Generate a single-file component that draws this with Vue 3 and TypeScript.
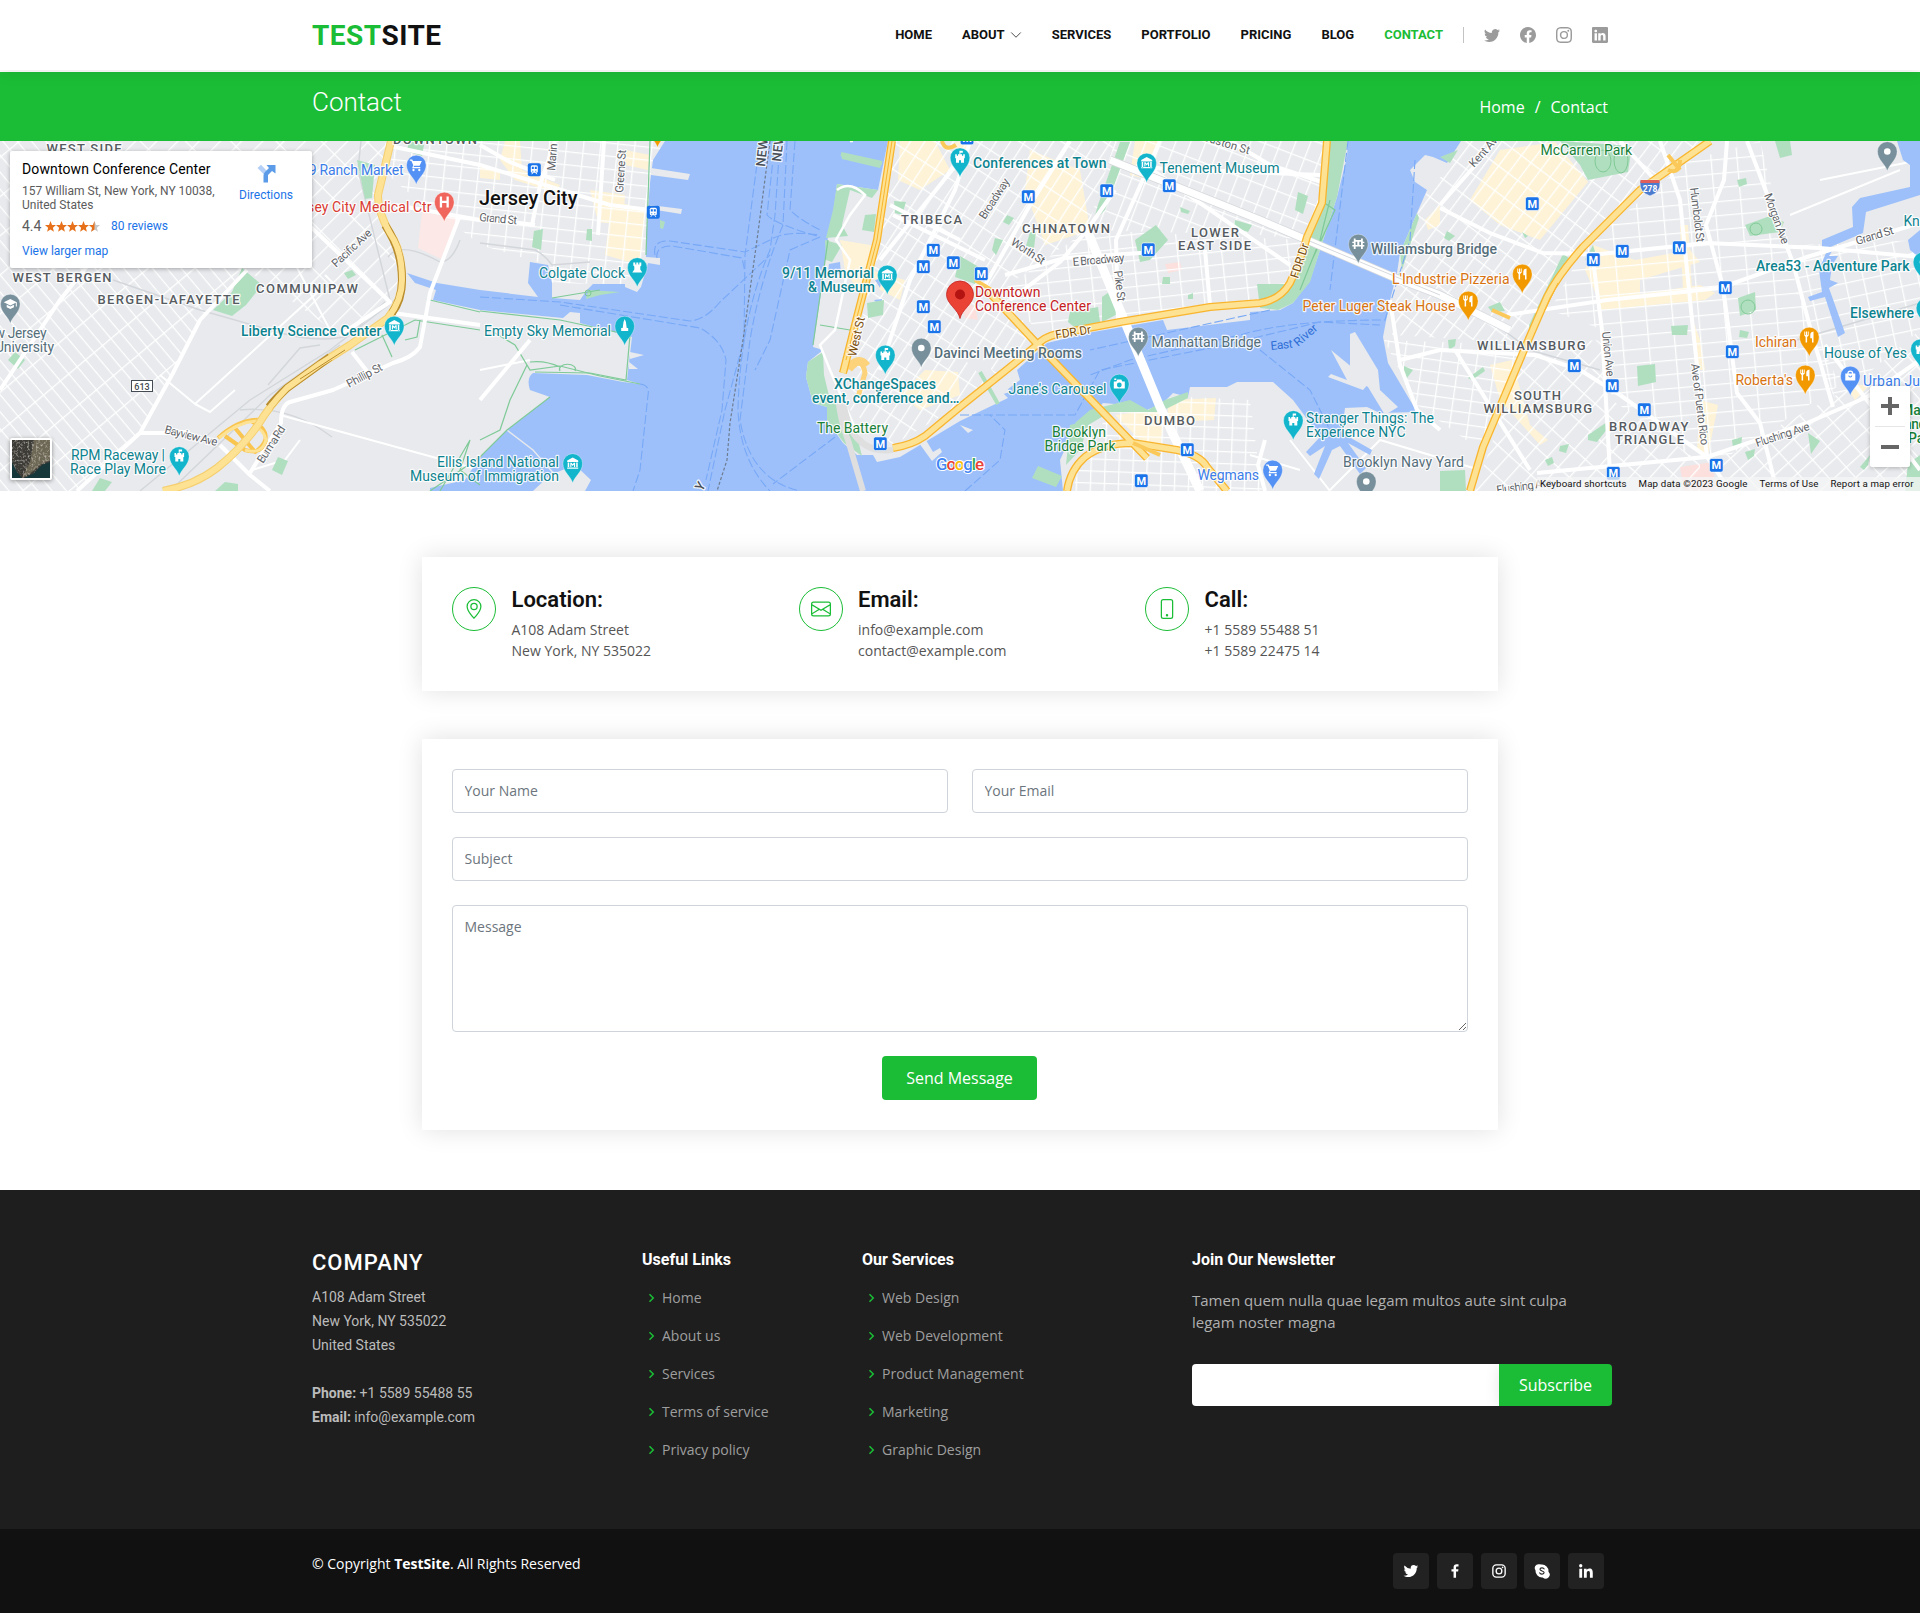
<script setup lang="ts">
type Tone = 'teal' | 'slate' | 'blue' | 'red' | 'orange' | 'green' | 'area' | 'street' | 'brown' | 'city' | 'main' | 'river' | 'state'
interface Label { t: string; x: number; y: number; w?: number; k: Tone; r?: number; b?: boolean }
interface Pin { x: number; y: number; c: string; g: string }

const nav = ['Home', 'About', 'Services', 'Portfolio', 'Pricing', 'Blog', 'Contact']
const usefulLinks = ['Home', 'About us', 'Services', 'Terms of service', 'Privacy policy']
const services = ['Web Design', 'Web Development', 'Product Management', 'Marketing', 'Graphic Design']

const icons: Record<string, string> = {
  twitter: 'M5.026 15c6.038 0 9.341-5.003 9.341-9.334 0-.14 0-.282-.006-.422A6.685 6.685 0 0 0 16 3.542a6.658 6.658 0 0 1-1.889.518 3.301 3.301 0 0 0 1.447-1.817 6.533 6.533 0 0 1-2.087.793A3.286 3.286 0 0 0 7.875 6.03a9.325 9.325 0 0 1-6.767-3.429 3.289 3.289 0 0 0 1.018 4.382A3.323 3.323 0 0 1 .64 6.575v.045a3.288 3.288 0 0 0 2.632 3.218 3.203 3.203 0 0 1-.865.115 3.23 3.23 0 0 1-.614-.057 3.283 3.283 0 0 0 3.067 2.277A6.588 6.588 0 0 1 .78 13.58a6.32 6.32 0 0 1-.78-.045A9.344 9.344 0 0 0 5.026 15z',
  facebook: 'M16 8.049c0-4.446-3.582-8.05-8-8.05C3.58 0-.002 3.603-.002 8.05c0 4.017 2.926 7.347 6.75 7.951v-5.625h-2.03V8.05H6.75V6.275c0-2.017 1.195-3.131 3.022-3.131.876 0 1.791.157 1.791.157v1.98h-1.009c-.993 0-1.303.621-1.303 1.258v1.51h2.218l-.354 2.326H9.25V16c3.824-.604 6.75-3.934 6.75-7.951z',
  instagram: 'M8 0C5.829 0 5.556.01 4.703.048 3.85.088 3.269.222 2.76.42a3.917 3.917 0 0 0-1.417.923A3.927 3.927 0 0 0 .42 2.76C.222 3.268.087 3.85.048 4.7.01 5.555 0 5.827 0 8.001c0 2.172.01 2.444.048 3.297.04.852.174 1.433.372 1.942.205.526.478.972.923 1.417.444.445.89.719 1.416.923.51.198 1.09.333 1.942.372C5.555 15.99 5.827 16 8 16s2.444-.01 3.298-.048c.851-.04 1.434-.174 1.943-.372a3.916 3.916 0 0 0 1.416-.923c.445-.445.718-.891.923-1.417.197-.509.332-1.09.372-1.942C15.99 10.445 16 10.173 16 8s-.01-2.445-.048-3.299c-.04-.851-.175-1.433-.372-1.941a3.926 3.926 0 0 0-.923-1.417A3.911 3.911 0 0 0 13.24.42c-.51-.198-1.092-.333-1.943-.372C10.443.01 10.172 0 7.998 0h.003zm-.717 1.442h.718c2.136 0 2.389.007 3.232.046.78.035 1.204.166 1.486.275.373.145.64.319.92.599.28.28.453.546.598.92.11.281.24.705.275 1.485.039.843.047 1.096.047 3.231s-.008 2.389-.047 3.232c-.035.78-.166 1.203-.275 1.485a2.47 2.47 0 0 1-.599.919c-.28.28-.546.453-.92.598-.28.11-.704.24-1.485.276-.843.038-1.096.047-3.232.047s-2.39-.009-3.233-.047c-.78-.036-1.203-.166-1.485-.276a2.478 2.478 0 0 1-.92-.598 2.48 2.48 0 0 1-.6-.92c-.109-.281-.24-.705-.275-1.485-.038-.843-.046-1.096-.046-3.233 0-2.136.008-2.388.046-3.231.036-.78.166-1.204.276-1.486.145-.373.319-.64.599-.92.28-.28.546-.453.92-.598.282-.11.705-.24 1.485-.276.738-.034 1.024-.044 2.515-.045v.002zm4.988 1.328a.96.96 0 1 0 0 1.92.96.96 0 0 0 0-1.92zm-4.27 1.122a4.109 4.109 0 1 0 0 8.217 4.109 4.109 0 0 0 0-8.217zm0 1.441a2.667 2.667 0 1 1 0 5.334 2.667 2.667 0 0 1 0-5.334z',
  linkedin: 'M0 1.146C0 .513.526 0 1.175 0h13.65C15.474 0 16 .513 16 1.146v13.708c0 .633-.526 1.146-1.175 1.146H1.175C.526 16 0 15.487 0 14.854V1.146zm4.943 12.248V6.169H2.542v7.225h2.401zm-1.2-8.212c.837 0 1.358-.554 1.358-1.248-.015-.709-.52-1.248-1.342-1.248-.822 0-1.359.54-1.359 1.248 0 .694.521 1.248 1.327 1.248h.016zm4.908 8.212V9.359c0-.216.016-.432.08-.586.173-.431.568-.878 1.232-.878.869 0 1.216.662 1.216 1.634v3.865h2.401V9.25c0-2.22-1.184-3.252-2.764-3.252-1.274 0-1.845.7-2.165 1.193v.025h-.016a5.54 5.54 0 0 1 .016-.025V6.169h-2.4c.03.678 0 7.225 0 7.225h2.4z',
}
const socials = ['twitter', 'facebook', 'instagram', 'linkedin']

const info = [
  {
    title: 'Location:', lines: ['A108 Adam Street', 'New York, NY 535022'],
    d: 'M12.166 8.94c-.524 1.062-1.234 2.12-1.96 3.07A31.493 31.493 0 0 1 8 14.58a31.481 31.481 0 0 1-2.206-2.57c-.726-.95-1.436-2.008-1.96-3.07C3.304 7.867 3 6.862 3 6a5 5 0 0 1 10 0c0 .862-.305 1.867-.834 2.94zM8 16s6-5.686 6-10A6 6 0 0 0 2 6c0 4.314 6 10 6 10zM8 8a2 2 0 1 1 0-4 2 2 0 0 1 0 4zm0 1a3 3 0 1 0 0-6 3 3 0 0 0 0 6z',
  },
  {
    title: 'Email:', lines: ['info@example.com', 'contact@example.com'],
    d: 'M0 4a2 2 0 0 1 2-2h12a2 2 0 0 1 2 2v8a2 2 0 0 1-2 2H2a2 2 0 0 1-2-2V4Zm2-1a1 1 0 0 0-1 1v.217l7 4.2 7-4.2V4a1 1 0 0 0-1-1H2Zm13 2.383-4.708 2.825L15 11.105V5.383Zm-.034 6.876-5.64-3.471L8 9.583l-1.326-.795-5.64 3.47A1 1 0 0 0 2 13h12a1 1 0 0 0 .966-.741ZM1 11.105l4.708-2.897L1 5.383v5.722Z',
  },
  {
    title: 'Call:', lines: ['+1 5589 55488 51', '+1 5589 22475 14'],
    d: 'M11 1a1 1 0 0 1 1 1v12a1 1 0 0 1-1 1H5a1 1 0 0 1-1-1V2a1 1 0 0 1 1-1h6zM5 0a2 2 0 0 0-2 2v12a2 2 0 0 0 2 2h6a2 2 0 0 0 2-2V2a2 2 0 0 0-2-2H5z M8 14a1 1 0 1 0 0-2 1 1 0 0 0 0 2z',
  },
]

/* ---- Map geometry: page-wide coordinates, the view box starts at y = 141 ---- */
const grids = [
  { id: 'ga', a: 50, w: 30, h: 11, p: '0,141 100,141 247,270 200,320 173,373 140,433 77,491 0,491' },
  { id: 'gb', a: 45, w: 15, h: 32, p: '100,141 388,141 378,207 398,250 400,290 340,335 247,270' },
  { id: 'gc', a: 6, w: 17, h: 13, p: '395,141 664,141 650,183 645,255 640,285 552,283 548,265 480,245 455,225 405,190 388,175' },
  { id: 'gd', a: 33, w: 12, h: 23, p: '895,141 1115,141 1087,230 1000,290 1040,343 960,405 893,445 850,410 862,320 880,240' },
  { id: 'ge', a: 21, w: 14, h: 20, p: '1115,141 1325,141 1322,203 1305,240 1260,235 1087,230' },
  { id: 'gf', a: -6, w: 22, h: 13, p: '1087,230 1305,240 1287,287 1260,303 1120,322 1045,338 1000,292' },
  { id: 'gg', a: 2, w: 14, h: 12, p: '1110,412 1188,397 1250,400 1262,491 1072,491 1085,450' },
  { id: 'gh', a: 37, w: 12, h: 22, p: '1447,170 1462,141 1705,141 1583,247 1547,297 1527,343 1392,335 1400,253 1428,190' },
  { id: 'gi', a: -5, w: 26, h: 14, p: '1586,245 1690,160 1760,141 1800,300 1840,385 1730,455 1700,462 1612,400 1603,330 1550,310' },
  { id: 'gj', a: 42, w: 15, h: 24, p: '1527,343 1603,340 1612,400 1700,462 1700,491 1475,491' },
  { id: 'gk', a: -12, w: 18, h: 15, p: '1800,245 1920,240 1920,330 1860,380 1835,400 1795,290' },
  { id: 'gl', a: 48, w: 14, h: 20, p: '1855,385 1920,330 1920,491 1725,491 1716,460' },
  { id: 'gm', a: 8, w: 18, h: 12, p: '1384,340 1525,345 1480,450 1417,405' },
]
const parks = [
  '242,268 262,285 246,305 232,316 213,310 232,292', '352,270 356,275 348,279 344,273', '410,141 424,145 422,156 406,151', '357,160 375,165 372,198 365,199',
  '8,360 15,352 25,360 18,369', '278,457 288,461 282,475 272,470', '92,491 100,478 112,482 105,491', '215,491 225,482 238,484 238,491',
  '534,231 543,229 541,250 532,247', '587,229 592,229 592,241 586,240', '588,290 620,292 600,295 586,299',
  '837,184 878,190 872,198 850,190 842,225 848,236 826,238 833,210', '865,215 876,214 874,232 862,230', '894,201 906,202 902,215 895,213', '825,240 842,245 832,262 826,260',
  '808,362 823,352 824,375 830,400 845,410 858,440 862,456 844,443 827,420 827,407 813,403 806,377', '867,303 884,300 883,315 868,318', '841,154 882,163 880,168 842,159',
  '1120,142 1130,142 1105,210 1093,222 1098,205', '1007,215 1014,218 1009,225 1003,222', '995,238 1003,240 996,255 992,250', '960,256 984,270 975,284 955,277', '1135,240 1156,225 1168,240 1150,260 1140,262',
  '1030,232 1036,232 1034,248 1026,246', '1070,312 1098,307 1100,322 1078,330 1068,322', '1102,297 1112,290 1118,314 1102,322',
  '1330,141 1348,141 1337,197 1320,250 1310,282 1293,303 1278,310 1260,308 1257,284 1288,284 1307,240 1322,203', '1298,192 1308,196 1303,214 1295,210', '1235,220 1252,225 1248,232 1234,227', '1180,207 1190,211 1188,214 1181,212', '1163,277 1170,277 1170,284 1162,284', '1188,295 1193,293 1193,299 1188,299',
  '1090,410 1130,400 1148,410 1165,400 1188,392 1188,398 1160,412 1110,412 1080,430 1075,423', '1038,466 1062,476 1056,487 1032,478', '1070,425 1090,420 1080,450 1066,465', '1400,253 1417,213 1419,218 1402,270', '1404,366 1413,370 1404,382',
  '1560,141 1632,146 1628,172 1588,180 1580,165', '1440,157 1458,150 1450,163', '1775,141 1790,141 1792,155 1780,158', '1737,180 1746,178 1747,184 1739,187', '1745,225 1770,216 1784,222 1780,232 1750,236', '1738,298 1755,292 1756,310 1740,316', '1637,366 1655,364 1656,382 1638,386', '1671,326 1688,325 1687,335 1672,335', '1585,260 1593,245 1596,255', '1563,254 1569,258 1530,335 1529,325', '1447,231 1455,236 1449,241 1444,238', '1522,232 1528,236 1525,238', '1588,435 1607,422 1608,428 1597,442 1588,440', '1560,446 1569,444 1566,453 1559,451', '1545,460 1552,457 1554,463 1548,466', '1732,440 1742,437 1741,448 1733,448', '1745,452 1755,449 1754,456 1748,460', '1808,433 1820,441 1811,454', '1860,467 1870,455 1868,465 1864,470', '1740,330 1749,332 1747,338 1739,337', '1468,378 1483,367 1485,371 1472,380', '1440,471 1465,470 1466,491 1440,491', '1448,340 1456,339 1455,346 1449,350', '1488,307 1500,302 1505,311 1492,312', '1908,464 1920,455 1920,491 1905,491',
]
const shops = [
  '505,141 520,141 522,170 560,185 556,193 515,180 500,160', '590,190 625,195 623,225 598,222', '612,200 645,210 640,265 605,255', '480,165 500,170 500,180 480,178', '625,150 650,155 648,170 625,165',
  '900,141 935,141 950,170 920,190 898,180', '840,240 876,246 864,300 845,270', '955,142 975,141 960,160', '1030,150 1080,170 1090,230 1045,245 1025,190', '1135,141 1160,141 1150,180 1130,175', '925,370 958,372 960,395 920,410 900,395', '957,285 975,295 968,310 955,300', '870,270 905,280 900,300 880,290',
  '1115,415 1165,408 1160,450 1140,440', '1168,400 1216,398 1214,420 1168,422', '1425,220 1440,205 1440,225 1428,230',
  '1500,150 1555,142 1588,182 1540,240 1500,225 1470,200', '1593,245 1635,260 1690,250 1700,262 1640,280 1640,300 1600,303 1585,270', '1600,300 1700,285 1715,293 1705,300 1600,310', '1680,225 1688,225 1692,290 1683,290', '1693,320 1700,340 1705,370 1695,370', '1490,365 1512,360 1530,425 1548,440 1540,445 1500,400', '1700,400 1718,405 1708,455 1697,450', '1845,385 1870,385 1855,400',
]
const bigRoads = [
  'M247 270 200 320 173 373 140 433 77 491', 'M460 215 430 293 420 347 Q412 358 393 363L333 390 290 402 Q281 405 281 423L250 473', 'M480 325 393 313', 'M0 390 60 300 140 200', 'M385 145 480 165 610 205 650 210', 'M480 400 530 340', 'M140 433 165 433 190 432', 'M220 445 250 475 270 491', 'M235 155 390 302 340 335', 'M352 352 370 375',
  'M532 225 540 185 555 141', 'M604 141 598 235', 'M480 218 535 225', 'M395 205 480 220', 'M480 145 510 162 555 180', 'M960 160 880 260', 'M960 240 890 205', 'M893 215 985 260', 'M970 141 955 190 910 280 880 370', 'M985 285 1030 205 1070 141', 'M1115 190 1087 230 1060 262 1010 300', 'M1127 167 1320 175', 'M1230 141 1270 165 1322 182', 'M1118 322 1116 240 1160 141', 'M1005 275 1065 258 1155 252', 'M1205 250 1210 305', 'M1145 165 1290 265',
  'M1440 208 1490 233 1543 253 1600 254 1707 243 1820 248 1920 257', 'M1507 315 1607 300 1720 288 1807 257 1910 226', 'M1537 473 1707 457 1807 423 1867 397 1920 360', 'M1620 395 1707 457 1730 491', 'M1593 260 1602 330 1611 491', 'M1660 141 1680 200 1692 320 1707 457', 'M1727 141 1724 180 1706 225 1723 287 1737 393 1760 423 1777 491', 'M1747 141 1793 263 1810 327 1833 407', 'M1440 205 1480 160 1495 141', 'M1440 350 1535 355 1580 370 1620 395', 'M1390 300 1400 365 1417 410 1440 430', 'M1400 360 1440 350', 'M1620 141 1655 180', 'M1455 350 1530 470', 'M1825 345 1920 470', 'M1265 440 1258 465 1265 491',
]
const highways = [
  'M893 448Q912 445 925 436L960 407 1010 367 1037 345Q1044 337 1057 334L1120 322 1210 307 1260 303Q1280 300 1290 283 1300 262 1307 237L1322 203 1327 141',
  'M987 290 1040 347 1147 458', 'M1067 491Q1070 470 1085 457 1103 443 1133 443L1177 450Q1200 455 1207 467L1227 491',
  'M1470 491 1483 447 1527 343 1547 297Q1558 275 1583 247L1640 190 1710 141', 'M892 141 877 240 857 317 843 373',
]
const ferries = [
  'M795 141 790 210Q800 220 820 230', 'M775 141 767 215Q775 224 820 237', 'M760 141 745 255 744 340 725 410 708 491', 'M780 141 775 215 770 250Q740 320 738 410 740 460 770 491', 'M787 141 783 225Q760 280 750 340L740 420Q750 480 800 491', 'M655 255Q652 240 670 241L745 252 770 240Q785 230 820 235', 'M657 258Q655 246 672 246L742 258 745 272', 'M480 297 560 302 690 321Q705 320 720 302L770 255', 'M560 305 700 328Q722 340 726 360L722 410 706 480', 'M640 384Q650 385 648 395L640 470 633 491', 'M820 237 790 250 770 340 755 370', 'M835 437 773 484', 'M1348 141 1330 290', 'M1415 160 1410 240 1385 320Q1290 320 1240 335L1130 360 1090 375', 'M1270 310 1180 330 1090 350', 'M960 415 1075 415 1100 370 1225 345 1320 322 1380 325', 'M1260 350 1310 390 1330 430', 'M965 491 1000 460 1005 430 990 415',
]
const parkLines = [
  'M480 311 560 320 630 335 626 380 590 373 535 372', 'M640 384 600 376 560 366 530 370 515 345 490 330', 'M550 397 507 430 480 457 430 491', 'M527 365 510 400 500 430 480 440', 'M560 367Q545 360 530 362M560 371A8 5 0 1 1 575 371', 'M430 300 480 312', 'M355 350 415 320 480 330', 'M420 320 417 337 405 340', 'M440 491 470 440 460 470 480 485', 'M382 335 392 357',
  'M650 141 646 255', 'M828 240 813 345', 'M552 298 600 290', 'M820 325 850 330', 'M843 410 850 440', 'M1320 200 1335 210 1312 260 1300 290 1320 240 1330 200',
]

const labels: Label[] = [
  { t: 'WEST SIDE', x: 46.5, y: 152.5, w: 75, k: 'area' }, { t: 'DOWNTOWN', x: 393, y: 143.5, w: 84, k: 'area' },
  { t: '99 Ranch Market', x: 301, y: 175, w: 102.5, k: 'blue' }, { t: 'Jersey City Medical Ctr', x: 287, y: 212, w: 144.5, k: 'red' },
  { t: 'Pacific Ave', x: 336, y: 268, w: 50, k: 'street', r: -43 }, { t: 'WEST BERGEN', x: 12.5, y: 281.5, w: 99, k: 'area' },
  { t: 'BERGEN-LAFAYETTE', x: 97.5, y: 303.5, w: 142, k: 'area' }, { t: 'COMMUNIPAW', x: 256, y: 293, w: 102, k: 'area' },
  { t: 'New Jersey', x: -22, y: 338, w: 68.5, k: 'slate' }, { t: 'University', x: -5, y: 352, w: 59, k: 'slate' },
  { t: 'Liberty Science Center', x: 241, y: 335.5, w: 140.5, k: 'teal', b: true }, { t: 'Phillip St', x: 349, y: 388, w: 39, k: 'street', r: -28 },
  { t: 'Bayview Ave', x: 164, y: 433, w: 54, k: 'street', r: 14 }, { t: 'Burma Rd', x: 263, y: 464, w: 42, k: 'street', r: -57 },
  { t: 'RPM Raceway |', x: 71, y: 460, w: 94, k: 'teal' }, { t: 'Race Play More', x: 70, y: 474, w: 96, k: 'teal' },
  { t: 'Ellis Island National', x: 437, y: 467, w: 122, k: 'teal' }, { t: 'Museum of Immigration', x: 410, y: 481, w: 149, k: 'teal' },
  { t: 'Jersey City', x: 479, y: 204.5, w: 98.5, k: 'city' }, { t: 'Grand St', x: 479, y: 221, w: 38, k: 'street', r: 5 },
  { t: 'Marin Blvd', x: 555, y: 171, w: 50, k: 'street', r: -85 }, { t: 'Greene St', x: 623, y: 193, w: 43, k: 'street', r: -86 },
  { t: 'NEW JERSEY', x: 765, y: 167, k: 'state', r: -84 }, { t: 'NEW YORK', x: 781, y: 162, k: 'state', r: -84 }, { t: 'Y', x: 702, y: 492, k: 'state', r: -58 },
  { t: 'Colgate Clock', x: 539, y: 278, w: 86, k: 'teal' }, { t: 'Empty Sky Memorial', x: 484, y: 336, w: 127, k: 'teal' },
  { t: '9/11 Memorial', x: 782, y: 278, w: 92, k: 'teal', b: true }, { t: '& Museum', x: 808, y: 292, w: 67, k: 'teal', b: true }, { t: 'TRIBECA', x: 901, y: 224, w: 61, k: 'area' },
  { t: 'West St', x: 856, y: 357, w: 40, k: 'brown', r: -77 }, { t: 'XChangeSpaces', x: 834, y: 389, w: 102, k: 'teal', b: true }, { t: 'event, conference and…', x: 812, y: 403, w: 147.5, k: 'teal', b: true },
  { t: 'The Battery', x: 817, y: 433, w: 71, k: 'green' }, { t: 'Davinci Meeting Rooms', x: 934, y: 358, w: 148, k: 'slate', b: true },
  { t: 'Conferences at Town', x: 973, y: 168, w: 133.5, k: 'teal', b: true }, { t: 'Tenement Museum', x: 1159.5, y: 173, w: 120, k: 'teal' },
  { t: 'Broadway', x: 985, y: 220, w: 46, k: 'street', r: -57 }, { t: 'Houston St', x: 1195, y: 138, w: 56, k: 'street', r: 17 },
  { t: 'CHINATOWN', x: 1022, y: 232.5, w: 88, k: 'area' }, { t: 'LOWER', x: 1191, y: 237, w: 48, k: 'area' }, { t: 'EAST SIDE', x: 1178, y: 250, w: 73, k: 'area' },
  { t: 'Worth St', x: 1010, y: 244, w: 38, k: 'street', r: 33 }, { t: 'E Broadway', x: 1073, y: 266, w: 52, k: 'street', r: -5 }, { t: 'Pike St', x: 1114, y: 271, w: 31, k: 'street', r: 83 },
  { t: 'FDR Dr', x: 1056, y: 339, w: 36, k: 'brown', r: -9 }, { t: 'FDR Dr', x: 1298, y: 279, w: 36, k: 'brown', r: -72 },
  { t: 'Downtown', x: 975, y: 297, w: 65.5, k: 'main' }, { t: 'Conference Center', x: 975, y: 311, w: 116, k: 'main' },
  { t: 'Manhattan Bridge', x: 1151.5, y: 347, w: 109.5, k: 'slate' }, { t: 'Williamsburg Bridge', x: 1371, y: 254, w: 126, k: 'slate', b: true },
  { t: "Jane's Carousel", x: 1008.5, y: 394, w: 98, k: 'teal' }, { t: 'DUMBO', x: 1144, y: 424.5, w: 51, k: 'area' },
  { t: 'Brooklyn', x: 1052, y: 437, w: 54, k: 'green' }, { t: 'Bridge Park', x: 1044.5, y: 451, w: 71, k: 'green' }, { t: 'Wegmans', x: 1197.5, y: 480, w: 61.5, k: 'blue' },
  { t: 'Stranger Things: The', x: 1306, y: 423, w: 128, k: 'teal' }, { t: 'Experience NYC', x: 1306, y: 437, w: 99.5, k: 'teal' }, { t: 'Brooklyn Navy Yard', x: 1343, y: 467, w: 121, k: 'slate' },
  { t: 'East', x: 1271, y: 350, w: 22, k: 'river', r: -6 }, { t: 'River', x: 1298, y: 347, w: 27, k: 'river', r: -41 },
  { t: "L'Industrie Pizzeria", x: 1392, y: 284, w: 117.5, k: 'orange' }, { t: 'Peter Luger Steak House', x: 1302.5, y: 311, w: 153, k: 'orange' },
  { t: 'McCarren Park', x: 1540.5, y: 155, w: 91.5, k: 'green' }, { t: 'Kent Ave', x: 1474, y: 168, w: 42, k: 'street', r: -48 },
  { t: 'Humboldt St', x: 1690, y: 188, w: 55, k: 'street', r: 83 }, { t: 'Morgan Ave', x: 1764, y: 195, w: 53, k: 'street', r: 70 }, { t: 'Grand St', x: 1857, y: 245, w: 39, k: 'street', r: -17 },
  { t: 'Knockdown', x: 1903.5, y: 226, w: 72, k: 'teal' }, { t: 'Area53 - Adventure Park', x: 1756, y: 271, w: 153.5, k: 'teal', b: true }, { t: 'Elsewhere', x: 1850, y: 318, w: 64, k: 'teal', b: true },
  { t: 'Ichiran', x: 1755, y: 347, w: 42, k: 'orange' }, { t: 'House of Yes', x: 1824, y: 358, w: 83, k: 'teal' }, { t: "Roberta's", x: 1735.5, y: 385, w: 57.5, k: 'orange' }, { t: 'Urban Jungle', x: 1863, y: 385.5, w: 84, k: 'blue' },
  { t: 'WILLIAMSBURG', x: 1477, y: 350, w: 108.5, k: 'area' }, { t: 'SOUTH', x: 1514, y: 400, w: 47, k: 'area' }, { t: 'WILLIAMSBURG', x: 1483.5, y: 413, w: 108.5, k: 'area' },
  { t: 'BROADWAY', x: 1609, y: 431, w: 79.5, k: 'area' }, { t: 'TRIANGLE', x: 1615, y: 444, w: 69, k: 'area' },
  { t: 'Union Ave', x: 1602, y: 332, w: 45, k: 'street', r: 84 }, { t: 'Ave of Puerto Rico', x: 1691, y: 364, w: 82, k: 'street', r: 83 },
  { t: 'Flushing Ave', x: 1757, y: 447, w: 56, k: 'street', r: -18 }, { t: 'Flushing Ave', x: 1497, y: 494, w: 56, k: 'street', r: -8 },
  { t: 'Maria', x: 1901, y: 415, k: 'green', b: true }, { t: 'Hernandez', x: 1876, y: 429, w: 64, k: 'green', b: true }, { t: 'Park', x: 1908, y: 443, k: 'green', b: true },
]

const TEAL = '#12b5cb', SLATE = '#78909c', BLUE = '#5491f5', ORANGE = '#f29900'
const pins: Pin[] = [
  { x: 637.3, y: 267.5, c: TEAL, g: 'rook' }, { x: 394.3, y: 326, c: TEAL, g: 'museum' }, { x: 179.3, y: 456.5, c: TEAL, g: 'castle' }, { x: 572.7, y: 463.5, c: TEAL, g: 'museum' },
  { x: 624.7, y: 326, c: TEAL, g: 'obelisk' }, { x: 887.3, y: 275, c: TEAL, g: 'museum' }, { x: 885.3, y: 355, c: TEAL, g: 'castle' }, { x: 960, y: 157.7, c: TEAL, g: 'castle' },
  { x: 1146.7, y: 163, c: TEAL, g: 'museum' }, { x: 1119.3, y: 384, c: TEAL, g: 'camera' }, { x: 1293.3, y: 420.5, c: TEAL, g: 'castle' }, { x: 1923, y: 262, c: TEAL, g: 'dot' }, { x: 1926, y: 308, c: TEAL, g: '' }, { x: 1920.5, y: 349, c: TEAL, g: 'castle' },
  { x: 10.3, y: 304, c: SLATE, g: 'cap' }, { x: 921.3, y: 348, c: SLATE, g: 'dot' }, { x: 1358.3, y: 244, c: SLATE, g: 'bridge' }, { x: 1138.3, y: 337, c: SLATE, g: 'bridge' }, { x: 1366.3, y: 481.5, c: SLATE, g: 'dot' }, { x: 1887.3, y: 151.5, c: SLATE, g: 'dot' },
  { x: 416.3, y: 165, c: BLUE, g: 'cart' }, { x: 1272.7, y: 470, c: BLUE, g: 'cart' }, { x: 1850.3, y: 376, c: BLUE, g: 'bag' }, { x: 444.3, y: 202, c: '#f0655c', g: 'hospital' },
  { x: 1522.3, y: 274, c: ORANGE, g: 'fork' }, { x: 1468.3, y: 301, c: ORANGE, g: 'fork' }, { x: 1809.3, y: 337, c: ORANGE, g: 'fork' }, { x: 1805.3, y: 375, c: ORANGE, g: 'fork' }, { x: 657.5, y: 128, c: ORANGE, g: '' },
]
const glyphs: Record<string, string> = {
  rook: 'M-4-5h2v2h1v-2h2v2h1v-2h2v3L3-1v3l2 3h-10l2-3v-3l-1-1z',
  museum: 'M0-6 5.5-3v1.5h-11V-3zM-5-1h1.5v5.5H-5zM3.5-1H5v5.5H3.5zM-5.5 4h11v1.2h-11zM-2.4 3.4V-.8h1.2L0 .8 1.2-.8h1.2v4.2H1.3V1L0 2.5-1.3 1v2.4z',
  castle: 'M-.6-7h3.4v2H.4v1.500H2V-2h1.200v-1.500h1.600V.5H4V5H1V2.500h-2V5h-3V.5h-.8v-4h1.600V-2h1.200v-1.500h1.400z',
  obelisk: 'M0-7 1.2-4 2 2h1.5v3h-7V2H-2l.8-6z',
  camera: 'M-5.5-2.5h2.5l1-2h4l1 2h2.5v7h-11zM0-1.4a2.4 2.4 0 1 0 0 4.8 2.4 2.4 0 0 0 0-4.8zM-5-5.5h2v1.5h-2z',
  dot: 'M0-3.3A3.3 3.3 0 1 0 0 3.3 3.3 3.3 0 0 0 0-3.3z',
  cap: 'M0-5 6.5-1.8V2.5h-1v-3.7L0 1.5-6.5-1.8zM-3.6.8 0 2.6 3.6.8v2.4L0 5-3.6 3.2z',
  bridge: 'M-4.5-5.5h1.8V-4h5.4v-1.5h1.8v3.2H6V-1H4.5v2H6v1.6H4.5V5H2.7V2.6h-5.4V5h-1.8V2.6H-6V1h1.5v-2H-6v-1.3h1.5zM-2.7-2.2V1H-1v-3.2zM1-2.2V1h1.7v-3.2z',
  cart: 'M-6.5-5.5h2.4l.8 1.5H5.5L3.3.8H-2L-2.8 2H4v1.2h-8.2L-3 .3-5-4.3h-1.5zM-2.8 3.8a1.2 1.2 0 1 0 .01 0zM3 3.8a1.2 1.2 0 1 0 .01 0z',
  bag: 'M-5-2.5h2a3 3 0 0 1 6 0h2v7H-5zM-1.8-2.5h3.6a1.8 1.8 0 0 0-3.6 0zM-2-.5a2 2 0 0 0 4 0h-1a1 1 0 0 1-2 0z',
  hospital: 'M-4.5-5.5h2.3v4.3h4.4v-4.3h2.3v11H2.2V1h-4.4v4.5h-2.3z',
  fork: 'M-5-5.5h1V-2h.7v-3.5h1V-2h.7v-3.5h1V-1.5L-2.2 0v5.5h-1.5V0L-5-1.5zM4.2-5.5v11H2.7V1.2H1V-2.5Q1-5 4.2-5.5z',
}
const metros: [number, number][] = [
  [933.3, 250.3], [923.3, 266.7], [953.3, 262.7], [923.3, 306.7], [934.3, 326.7], [880.3, 443.7], [1028.3, 196.7], [1106.7, 190.7], [1169.3, 185.7], [1148.3, 249.7], [981.3, 273.7], [1187.3, 449.7], [1141.3, 480.7], [967, 138],
  [1532.3, 203.7], [1593.3, 259.7], [1622.3, 251.3], [1679.3, 247.7], [1725.3, 287.7], [1732.3, 351.7], [1574.3, 365.7], [1612.3, 385.7], [1644.3, 409.7], [1716.3, 465.3], [1613.3, 473.3],
]
const trains: [number, number][] = [[534.3, 169.7], [653.3, 212.3]]
const star = 'M5.5 0 7 3.9 11 4.1 7.9 6.7 8.9 10.8 5.5 8.5 2.1 10.8 3.1 6.7 0 4.1 4 3.9z'
</script>

<template>
  <div class="page">
    <header class="header">
      <div class="container header-row">
        <a class="logo"><span>Test</span>Site</a>
        <nav class="nav">
          <a v-for="n in nav" :key="n" :class="{ active: n === 'Contact' }">{{ n }}
            <svg v-if="n === 'About'" class="chev" viewBox="0 0 16 16"><path fill="none" stroke="currentColor" stroke-linecap="round" stroke-linejoin="round" d="M2 5l6 6 6-6" /></svg>
          </a>
        </nav>
        <div class="head-social">
          <svg v-for="s in socials" :key="s" viewBox="0 0 16 16"><path :d="icons[s]" fill="currentColor" /></svg>
        </div>
      </div>
    </header>

    <section class="crumbs">
      <div class="container crumbs-row">
        <h2>Contact</h2>
        <ol><li>Home</li><li class="sep">/</li><li>Contact</li></ol>
      </div>
    </section>

    <section class="map">
      <svg class="map-art" viewBox="0 141 1920 350" width="1920" height="350">
        <defs>
          <pattern v-for="g in grids" :id="g.id" :key="g.id" patternUnits="userSpaceOnUse" :width="g.w" :height="g.h" :patternTransform="`rotate(${g.a})`">
            <path :d="`M0 0H${g.w}M0 0V${g.h}`" stroke="#fff" stroke-width="2.6" fill="none" />
          </pattern>
        </defs>
        <rect y="141" width="1920" height="350" fill="#e8eaed" />
        <polygon v-for="(p, i) in shops" :key="'s' + i" :points="p" fill="#fef3d6" />
        <polygon points="422,212 458,218 443,260 418,248" fill="#fce8e6" />
        <polygon points="1165,264 1180,262 1182,270 1168,273" fill="#fce0de" />
        <polygon points="1680,467 1712,462 1716,491 1684,491" fill="#fce0de" />
        <polygon points="960,300 975,307 978,320 965,318" fill="#fce0de" />
        <polygon v-for="g in grids" :key="g.id + 'p'" :points="g.p" :fill="`url(#${g.id})`" />

        <g fill="none" stroke="#d3d6da" stroke-width="1.4">
          <path d="M113 280 200 310 270 330Q320 345 350 335L385 302" /><path d="M140 491 250 400 330 350 395 300" /><path d="M170 491 270 395 340 345" /><path d="M361 141 358 170 390 300" /><path d="M388 257Q400 240 440 262 452 262 460 240" /><path d="M240 410Q290 405 332 437" /><path d="M480 243 535 250Q545 255 552 265L590 262" /><path d="M268 385 300 348 320 345" /><path d="M1780 345 1920 303" /><path d="M1490 320 1530 350 1600 370" />
        </g>
        <g fill="none" stroke="#fff" stroke-width="2">
          <path d="M280 415 480 470M300 440 285 460 252 470M160 375 195 404 320 290M195 404 210 412 235 390M325 275 340 290M285 245 330 330M480 370 530 360M1330 490 1380 440 1480 470M1290 440 1330 491M1820 180 1920 160M1790 215 1900 170M1250 455 1300 470" />
        </g>

        <path fill="#9dc0fa" d="M665 141 653 160 650 183 646 237 646 257 660 258 660 265 648 263 641 287 637 292 625 287 625 284 593 284 587 290 580 300 552 298 552 283 548 265 530 262 528 283 538 297 480 290 437 283 407 273 415 283 436 290 433 300 480 310 563 318 570 312 580 313 580 323 632 337 627 380 640 384 623 382 587 375 533 373Q526 378 530 390L550 397 507 430 480 457 465 480 430 488V491H1063L1060 460 1077 423 1090 417 1103 403 1127 405 1147 410 1163 403 1173 393 1188 397 1190 387 1227 387 1237 382 1273 382 1293 400 1313 427 1320 437 1306 452 1310 456 1325 446 1314 474 1319 479 1332 450 1340 446 1360 474 1366 468 1348 443 1370 455 1372 450 1342 433 1345 408 1367 407 1380 413 1417 412 1388 363 1383 337 1390 300 1397 273 1400 253 1417 213 1427 190 1415 182 1410 170 1425 155 1433 157 1447 163 1461 141H1348L1347 157 1337 197 1320 250 1310 280 1293 303 1280 310 1250 312 1250 320 1167 330 1163 320 1093 332 1047 343 1017 370 1020 380 1003 393 1008 398 960 421 920 445 900 457 877 462 873 455 857 455 843 443 827 420 827 407 813 403 806 377 808 362 823 350 813 347 820 300 828 237 833 217 837 184 878 190 888 141Z" />
        <path fill="#9dc0fa" d="M1897 141 1903 160 1910 165 1910 187 1860 198 1852 207 1853 227 1822 240 1822 248 1834 248 1829 256 1838 256 1832 265 1830 280 1838 283 1829 288 1845 333 1838 337 1825 297 1810 301 1808 297 1822 292 1819 270 1828 248 1863 233 1866 212 1920 195V141Z" />
        <path fill="#9dc0fa" d="M1908 240 1920 230V258L1910 250Z" />
        <g fill="#e8eaed">
          <path d="M651 168 690 174 688 180 651 175ZM650 205 682 209 681 214 650 209ZM533 491 550 475 575 465 591 480 585 491ZM919 443 926 440 933 452 940 448 942 452 932 461ZM1350 334 1355 332 1378 370 1380 390 1398 407 1385 415 1368 387 1350 374ZM1331 350 1370 382 1363 390 1328 377 1331 374 1347 380ZM630 352 644 355 630 359ZM629 362 638 369 629 369ZM1000 395 1010 392 975 350 965 360ZM960 425 973 430 968 433Z" />
          <path d="M507 430 533 450 555 475" fill="none" stroke="#e8eaed" stroke-width="1.4" />
        </g>
        <path d="M829 264 840 262 841 275 828 272ZM875 280 882 278 880 288ZM874 300 882 299 881 307Z" fill="#9dc0fa" />
        <polygon v-for="(p, i) in parks" :key="'k' + i" :points="p" fill="#b0dfc0" />
        <polygon points="660,220 665,222 663,229 660,228" fill="#b0dfc0" />
        <path d="M841 154 882 163M980 372 998 404" stroke="#b0dfc0" stroke-width="4" fill="none" />
        <path v-for="(d, i) in parkLines" :key="'pl' + i" :d="d" fill="none" stroke="#7fca98" stroke-width="1.2" />
        <g fill="none" stroke="#81c995" stroke-width="1"><ellipse cx="1603" cy="161" rx="8" ry="11" /><ellipse cx="1621" cy="160" rx="7" ry="13" /><circle cx="1756" cy="229" r="6" /><circle cx="1748" cy="307" r="7" /><circle cx="588" cy="293" r="3" /></g>

        <path v-for="(d, i) in ferries" :key="'f' + i" :d="d" fill="none" stroke="#78a8f6" stroke-width="1.1" stroke-dasharray="9 3" />
        <path d="M770 141 757 240 743 340 730 423 727 460 717 491" fill="none" stroke="#6e7c90" stroke-width="1.2" stroke-dasharray="3 2" />

        <path v-for="(d, i) in bigRoads" :key="'b' + i" :d="d" fill="none" stroke="#fff" stroke-width="4" stroke-linejoin="round" />
        <path d="M853 141 850 141M837 190Q850 180 865 195L850 215 836 240 850 260 835 330 820 345 830 370 860 440" fill="none" stroke="#fff" stroke-width="2.5" />
        <path d="M1085 225 1127 327 1160 407 1200 491" fill="none" stroke="#fff" stroke-width="9" />
        <path d="M1110 160 1260 220 1307 240 1393 277 1440 295 1510 330" fill="none" stroke="#d6d9dd" stroke-width="8.5" /><path d="M1110 160 1260 220 1307 240 1393 277 1440 295 1510 330" fill="none" stroke="#fff" stroke-width="7" /><path d="M1307 240 1440 295" stroke="#d6d9dd" />
        <path d="M838 395Q840 420 848 440L863 491M843 400Q850 455 893 450" fill="none" stroke="#dfdfe0" stroke-width="6" />
        <path d="M850 370Q862 355 865 373L858 397M845 370Q858 352 868 365" fill="none" stroke="#fcd27a" stroke-width="5" />

        <g fill="none" stroke-linejoin="round">
          <g stroke="#f9c54f" stroke-width="4"><path d="M218 438Q240 418 262 420M235 428 255 452Q272 440 262 428L250 420M225 436 245 450Q262 455 266 440" /></g>
          <path d="M219 438Q240 420 262 421M245 450Q262 455 266 440 264 430 255 426" stroke="#fde293" stroke-width="3" />
          <path d="M391 141 378 195Q378 215 394 240 402 255 402 280 402 300 388 318L350 345 320 364 287 388Q270 405 258 425 240 450 217 468 195 485 163 491" stroke="#f5cf70" stroke-width="8" />
          <path d="M385 225Q402 250 402 280 402 300 392 313M330 357 287 388Q276 398 269 407" stroke="#b98c2e" stroke-width="8" />
          <path d="M391 141 378 195Q378 215 394 240 402 255 402 280 402 300 388 318L350 345 320 364 287 388Q270 405 258 425 240 450 217 468 195 485 163 491" stroke="#fde293" stroke-width="6" />
          <path d="M345 350 300 379" stroke="#b98c2e" />
          <path v-for="(d, i) in highways" :key="'h' + i" :d="d" stroke="#f9b52e" stroke-width="8" />
          <path v-for="(d, i) in highways" :key="'hi' + i" :d="d" stroke="#fde293" stroke-width="5.4" />
          <path d="M892 141 877 240 857 317 846 360M1558 283 1545 310" stroke="#f9b52e" />
          <path d="M1492 310 1510 318M1668 170Q1680 175 1680 160M1133 443 1160 455M942 141Q945 152 956 145M975 280 1000 295M1668 155 1680 170" stroke="#fbc95a" stroke-width="4" />
        </g>

        <g transform="translate(1650 187)"><path d="M-10-5Q-10-6-9-7H9Q10-6 10-4 11 5 0 9-11 5-10-4z" fill="#4a7bcf" stroke="#fff" stroke-width=".6" /><path d="M-9.5-7h19v3h-19z" fill="#df5f5b" /><text y="5" text-anchor="middle" class="shield">278</text></g>
        <rect x="131.500" y="380.500" width="21" height="11" fill="#fff" stroke="#444b52" /><text x="142" y="389.500" class="route" text-anchor="middle">613</text>

        <g v-for="(m, i) in metros" :key="'m' + i" :transform="`translate(${m[0]} ${m[1]})`"><rect x="-6.800" y="-6.800" width="13.600" height="13.600" rx="2" fill="#1a73e8" stroke="#fff" stroke-width=".6" /><text y="4" text-anchor="middle" class="metro">M</text></g>
        <g v-for="(m, i) in trains" :key="'t' + i" :transform="`translate(${m[0]} ${m[1]})`"><rect x="-6.500" y="-6.500" width="13" height="13" rx="2" fill="#1a73e8" /><rect x="-3.500" y="-4.500" width="7" height="7.500" rx="1.500" fill="#fff" /><path d="M-2.500-3h2v2.200h-2zM.5-3h2v2.200h-2zM-2 1h1v1h-1zM1 1h1v1h-1z" fill="#1a73e8" /><path d="M-2.500 4.500l1-1.500M2.500 4.500l-1-1.500" stroke="#fff" /></g>

        <g v-for="(p, i) in pins" :key="'p' + i" :transform="`translate(${p.x} ${p.y})`"><path d="M0 19.500C-1.500 13-9.800 8.500-9.800 0A9.800 9.800 0 1 1 9.800 0C9.800 8.500 1.500 13 0 19.500z" :fill="p.c" stroke="#fff" stroke-opacity=".55" stroke-width=".6" /><path v-if="p.g" :d="glyphs[p.g]" fill="#fff" fill-rule="evenodd" /></g>

        <text v-for="(l, i) in labels" :key="'l' + i" :x="l.x" :y="l.y" :textLength="l.w" :class="['lb', l.k, { strong: l.b }]" :transform="l.r ? `rotate(${l.r} ${l.x} ${l.y})` : undefined">{{ l.t }}</text>

        <path d="M960 318.500C958 309 946.500 304 946.500 294.500A13.500 13.500 0 1 1 973.500 294.500C973.500 304 962 309 960 318.500z" fill="#ea4335" stroke="#c5221f" stroke-width=".8" /><circle cx="960" cy="294.500" r="5" fill="#b31412" />
        <text x="936" y="470" textLength="48" class="google"><tspan fill="#4285f4">G</tspan><tspan fill="#ea4335">o</tspan><tspan fill="#fbbc04">o</tspan><tspan fill="#4285f4">g</tspan><tspan fill="#34a853">l</tspan><tspan fill="#ea4335">e</tspan></text>

        <rect x="1537" y="477" width="383" height="14" fill="#f5f5f5" fill-opacity=".75" />
        <g class="terms"><text x="1540" y="487" textLength="86.500">Keyboard shortcuts</text><text x="1638.500" y="487" textLength="109">Map data ©2023 Google</text><text x="1759.500" y="487" textLength="59">Terms of Use</text><text x="1830.500" y="487" textLength="83">Report a map error</text></g>
      </svg>

      <div class="place">
        <div class="place-main">
          <strong>Downtown Conference Center</strong>
          <p>157 William St, New York, NY 10038, United States</p>
          <div class="rating"><b>4.4</b>
            <svg width="55" height="11" viewBox="0 0 55 11"><path v-for="i in 4" :key="i" :d="star" :transform="`translate(${(i - 1) * 11} 0)`" fill="#e7711b" /><path :d="star" transform="translate(44 0)" fill="#c7c7c7" /><path d="M49.500 0V8.500L46.100 10.800 47.100 6.700 44 4.100 48 3.900z" fill="#e7711b" /></svg>
            <a>80 reviews</a></div>
          <a class="larger">View larger map</a>
        </div>
        <div class="directions">
          <svg width="19" height="19" viewBox="0 0 19 19"><path d="M.5 4 4 .8 10.500 7.500 7.500 11z" fill="#b5d0f6" /><path d="M6.500 18.500V11.500Q6.500 9.500 8 8L12 4 9.500 1H18.500V9.500L15 7 11 11V18.500z" fill="#5b9be8" /></svg>
          <a>Directions</a>
        </div>
      </div>
      <div class="thumb">
        <svg viewBox="0 0 38 38" width="38" height="38">
          <filter id="grain"><feTurbulence type="fractalNoise" baseFrequency=".45" numOctaves="3" seed="4" /><feColorMatrix values="0 0 0 0 .75 0 0 0 0 .72 0 0 0 0 .65 0 0 0 2.600 -1.250" /></filter>
          <rect width="38" height="38" fill="#3d3b36" /><path d="M22 0H38V20L28 25 20 32 10 38 18 22z" fill="#6c6654" /><rect width="38" height="38" filter="url(#grain)" opacity=".7" /><path d="M0 22 5 32 10 38H0zM38 22 30 25 22 33 12 38H38z" fill="#17383b" />
        </svg>
      </div>
      <div class="zoomer"><i class="plus"></i><hr><i></i></div>
    </section>

    <main class="contact">
      <section class="card info">
        <div v-for="c in info" :key="c.title" class="info-item">
          <span class="ring"><svg viewBox="0 0 16 16" width="20" height="20"><path :d="c.d" fill="currentColor" /></svg></span>
          <div><h4>{{ c.title }}</h4><p>{{ c.lines[0] }}<br>{{ c.lines[1] }}</p></div>
        </div>
      </section>
      <form class="card form">
        <div class="pair"><input placeholder="Your Name"><input placeholder="Your Email"></div>
        <input placeholder="Subject">
        <textarea placeholder="Message"></textarea>
        <button type="button">Send Message</button>
      </form>
    </main>

    <footer class="footer">
      <div class="footer-top">
        <div class="container footer-cols">
          <div class="company">
            <h3>Company</h3>
            <p>A108 Adam Street<br>New York, NY 535022<br>United States<br><br><strong>Phone:</strong> +1 5589 55488 55<br><strong>Email:</strong> info@example.com</p>
          </div>
          <div class="links"><h4>Useful Links</h4>
            <ul><li v-for="l in usefulLinks" :key="l"><svg viewBox="0 0 24 24" width="18" height="18"><path d="M10.707 17.707 16.414 12l-5.707-5.707-1.414 1.414L13.586 12l-4.293 4.293z" fill="#1bbd36" /></svg>{{ l }}</li></ul>
          </div>
          <div class="links wide"><h4>Our Services</h4>
            <ul><li v-for="l in services" :key="l"><svg viewBox="0 0 24 24" width="18" height="18"><path d="M10.707 17.707 16.414 12l-5.707-5.707-1.414 1.414L13.586 12l-4.293 4.293z" fill="#1bbd36" /></svg>{{ l }}</li></ul>
          </div>
          <div class="news"><h4>Join Our Newsletter</h4>
            <p>Tamen quem nulla quae legam multos aute sint culpa legam noster magna</p>
            <div class="subscribe"><input aria-label="Email"><button type="button">Subscribe</button></div>
          </div>
        </div>
      </div>
      <div class="container footer-bottom">
        <div class="copy">© Copyright <strong>TestSite</strong>. All Rights Reserved</div>
        <div class="social">
          <a><svg viewBox="0 0 24 24"><path d="M19.633 7.997c.013.175.013.349.013.523 0 5.325-4.053 11.461-11.46 11.461-2.282 0-4.402-.661-6.186-1.809.324.037.636.05.973.05a8.07 8.07 0 0 0 5.001-1.721 4.036 4.036 0 0 1-3.767-2.793c.249.037.499.062.761.062.361 0 .724-.05 1.061-.137a4.027 4.027 0 0 1-3.23-3.953v-.05c.537.299 1.160.486 1.820.511a4.022 4.022 0 0 1-1.796-3.354c0-.748.199-1.434.548-2.032a11.457 11.457 0 0 0 8.306 4.215c-.062-.3-.1-.611-.1-.923a4.026 4.026 0 0 1 4.028-4.028c1.160 0 2.207.486 2.943 1.272a7.957 7.957 0 0 0 2.556-.973 4.020 4.020 0 0 1-1.771 2.220 8.073 8.073 0 0 0 2.319-.624 8.645 8.645 0 0 1-2.019 2.083z" /></svg></a>
          <a><svg viewBox="0 0 24 24"><path d="M13.397 20.997v-8.196h2.765l.411-3.209h-3.176V7.548c0-.926.258-1.560 1.587-1.560h1.684V3.127A22.336 22.336 0 0 0 14.201 3c-2.444 0-4.122 1.492-4.122 4.231v2.355H7.332v3.209h2.753v8.202h3.312z" /></svg></a>
          <a><svg viewBox="0 0 24 24"><rect x="3.800" y="3.800" width="16.400" height="16.400" rx="4.600" fill="none" stroke="#fff" stroke-width="1.800" /><circle cx="12" cy="12" r="3.800" fill="none" stroke="#fff" stroke-width="1.800" /><circle cx="16.800" cy="7.200" r="1.100" /></svg></a>
          <a><svg viewBox="0 0 24 24"><path d="M8 3a5 5 0 0 1 3 .4A8.700 8.700 0 0 1 20.600 13 5 5 0 0 1 13 20.600 8.700 8.700 0 0 1 3.400 11 5 5 0 0 1 8 3z" /><path d="M14.800 9.300C14.300 7.400 9.300 7.200 9.300 9.800 9.300 12.400 14.800 11.400 14.800 14.100 14.800 16.800 9.400 16.600 9 14.500" fill="none" stroke="#222" stroke-width="1.500" stroke-linecap="round" /></svg></a>
          <a><svg viewBox="0 0 24 24"><circle cx="4.983" cy="5.009" r="2.188" /><path d="M9.237 8.855v12.139h3.769v-6.003c0-1.584.298-3.118 2.262-3.118 1.937 0 1.961 1.811 1.961 3.218v5.904H21v-6.657c0-3.270-.704-5.783-4.526-5.783-1.835 0-3.065 1.007-3.568 1.960h-.051v-1.660H9.237zm-6.142 0H6.870v12.139H3.095z" /></svg></a>
        </div>
      </div>
    </footer>
  </div>
</template>

<style>
body { margin: 0; background: #fff; }
</style>

<style scoped>
* { box-sizing: border-box; }
.page { width: 1920px; height: 1613px; display: flex; flex-direction: column; font-family: "Open Sans", sans-serif; color: #444; font-size: 16px; line-height: 24px; overflow: hidden; }
h2, h3, h4, p, ul, ol { margin: 0; padding: 0; list-style: none; font-weight: 400; }
input, textarea, button { font-family: inherit; outline: none; }
.container { width: 1320px; margin: 0 auto; padding: 0 12px; }
.header { height: 70px; flex: none; margin-bottom: 2px; background: #fff; position: relative; z-index: 3; box-shadow: 0 2px 15px rgba(0, 0, 0, .1); }
.header-row { display: flex; align-items: center; height: 70px; }
.logo { font: 700 28px/34px Roboto, sans-serif; color: #111; text-transform: uppercase; margin-right: auto; letter-spacing: .5px; padding-top: 2px; }
.logo span { color: #1bbd36; }
.nav { display: flex; gap: 30px; font: 700 13px/18px Roboto, sans-serif; color: #111; text-transform: uppercase; }
.nav a { display: flex; align-items: center; }
.nav .active { color: #1bbd36; }
.chev { width: 12px; height: 12px; margin-left: 5px; }
.head-social { display: flex; gap: 20px; margin-left: 20px; padding-left: 20px; border-left: 1px solid #c3c3c3; height: 16px; color: #9b9b9b; }
.head-social svg { width: 16px; height: 16px; }
.crumbs { height: 69px; flex: none; background: #1bbd36; color: #fff; }
.crumbs-row { display: flex; justify-content: space-between; }
.crumbs h2 { font: 300 26px/31px Roboto, sans-serif; padding-top: 15px; }
.crumbs ol { display: flex; padding-top: 23px; }
.crumbs .sep { padding: 0 10px; }

.map { position: relative; height: 350px; flex: none; overflow: hidden; }
.map-art { display: block; font-family: Roboto, sans-serif; }
.lb { font-size: 14px; paint-order: stroke; stroke: #fff; stroke-width: 2.4px; stroke-opacity: .85; stroke-linejoin: round; }
.strong { font-weight: 500; }
.teal { fill: #0d838f; }
.slate { fill: #546e7a; }
.blue { fill: #3b7de9; }
.red { fill: #d93a32; }
.main { fill: #c5221f; }
.orange { fill: #d87211; }
.green { fill: #188038; }
.area { fill: #565b61; font-size: 13px; font-weight: 500; }
.street { fill: #5f6368; font-size: 11.5px; }
.brown { fill: #7a4d0c; font-size: 12px; }
.city { fill: #111; font-size: 20px; font-weight: 500; }
.river { fill: #2f6fd6; font-size: 12px; stroke: none; }
.state { fill: #4a4f57; font-size: 13px; font-weight: 500; }
.metro { fill: #fff; font-size: 11px; font-weight: 700; }
.shield { fill: #fff; font-size: 8.5px; font-weight: 700; }
.route { fill: #444b52; font-size: 9px; font-weight: 500; }
.google { font-size: 17px; font-weight: 500; paint-order: stroke; stroke: #fff; stroke-width: 2px; }
.terms { font-size: 9.7px; fill: #111; }
.place { position: absolute; left: 10px; top: 10px; width: 302px; height: 117px; padding: 9px 11px 9px 12px; background: #fff; border-radius: 2px; box-shadow: 0 1px 4px rgba(0, 0, 0, .3); display: flex; justify-content: space-between; font: 12px/14px Roboto, sans-serif; color: #5b5b5b; }
.place-main { width: 205px; }
.place strong { display: block; font-size: 14px; line-height: 18px; font-weight: 400; letter-spacing: .12px; color: #000; white-space: nowrap; }
.place p { margin-top: 6px; width: 200px; }
.place a { color: #1a73e8; }
.rating { display: flex; align-items: center; margin-top: 6px; line-height: 16px; }
.rating b { font-size: 14px; font-weight: 400; width: 23px; }
.rating a { margin-left: 11px; }
.larger { display: block; margin-top: 10px; }
.directions { width: 70px; display: flex; flex-direction: column; align-items: center; padding-top: 4px; gap: 5px; }
.thumb { position: absolute; left: 10px; top: 297px; width: 42px; height: 42px; padding: 2px; background: #fff; border-radius: 2px; box-shadow: 0 1px 4px rgba(0, 0, 0, .4); }
.thumb svg { display: block; }
.zoomer { position: absolute; left: 1870px; top: 245px; width: 40px; height: 81px; background: #fff; border-radius: 2px; box-shadow: 0 1px 4px rgba(0, 0, 0, .25); display: flex; flex-direction: column; align-items: center; justify-content: space-between; padding: 18px 0; }
.zoomer i { width: 18px; height: 4px; background: #666; }
.zoomer .plus { position: relative; }
.zoomer .plus::after { content: ""; position: absolute; left: 7px; top: -7px; width: 4px; height: 18px; background: #666; }
.zoomer hr { width: 30px; height: 1px; border: 0; margin: 0; background: #e6e6e6; }

.contact { width: 1076px; margin: 66px auto 60px; display: flex; flex-direction: column; gap: 48px; }
.card { background: #fff; padding: 30px; box-shadow: 0 0 24px rgba(0, 0, 0, .12); }
.info { height: 134px; display: flex; gap: 23.6px; }
.info-item { flex: 1; display: flex; gap: 15.5px; }
.ring { width: 44px; height: 44px; border: 1px solid #1bbd36; border-radius: 50%; color: #1bbd36; display: flex; align-items: center; justify-content: center; }
.ring svg { display: block; }
.info h4 { font: 600 22px/26px Roboto, sans-serif; color: #111; }
.info p { font-size: 14px; line-height: 21px; color: #555; margin-top: 6px; }
.form { height: 391px; display: flex; flex-direction: column; }
.pair { display: flex; gap: 24px; }
.form input, .form textarea { height: 44px; width: 100%; flex-shrink: 0; border: 1px solid #ced4da; border-radius: 4px; padding: 0 12px 2px 11.5px; font-size: 14px; margin-bottom: 24px; }
.pair input { flex: 1; width: 0 !important; }
.form textarea { height: 127px; padding: 10px 12px 10px 11.5px; line-height: 21px; display: block; }
::placeholder { color: #6c757d; opacity: 1; }
.form button { align-self: center; width: 155px; height: 44px; border: 0; border-radius: 4px; background: #1bbd36; color: #fff; font-size: 16px; margin-right: 1px; }

.footer { background: #111; color: #fff; flex: none; height: 423px; font-size: 14px; }
.footer-top { background: #1e1e1e; height: 339px; padding-top: 60px; }
.footer-cols { display: flex; }
.footer-cols > div { flex-shrink: 0; }
.company { width: 330px; font-family: Roboto, sans-serif; }
.company h3 { font-size: 22px; line-height: 26px; font-weight: 500; text-transform: uppercase; letter-spacing: 1px; margin-bottom: 9px; }
.company p { color: #bbb; }
.footer-top h4 { font: 700 16px/19px Roboto, sans-serif; color: #fff; }
.links { width: 220px; }
.links.wide { width: 330px; }
.links ul { margin-top: 20px; display: flex; flex-direction: column; gap: 20px; }
.links li { display: flex; align-items: center; height: 18px; color: #9e9e9e; }
.links svg { margin-right: 2px; }
.news { width: 420px; }
.news p { font-size: 15px; line-height: 22px; color: #b0b0b0; margin: 20px 25px 31px 0; }
.subscribe { display: flex; width: 420px; height: 42px; border-radius: 4px; overflow: hidden; }
.subscribe input { flex: 1; border: 0; background: #fff; }
.subscribe button { width: 113px; border: 0; background: #1bbd36; color: #fff; font-size: 16px; box-shadow: 0 2px 15px rgba(0, 0, 0, .1); }
.footer-bottom { display: flex; justify-content: space-between; padding-top: 24px; }
.copy { line-height: 21px; }
.social { display: flex; gap: 7.75px; margin-right: 4px; }
.social a { width: 36px; height: 36px; background: #222; border-radius: 4px; display: flex; align-items: center; justify-content: center; }
.social svg { width: 18px; height: 18px; fill: #fff; margin-top: -1px; }
</style>
